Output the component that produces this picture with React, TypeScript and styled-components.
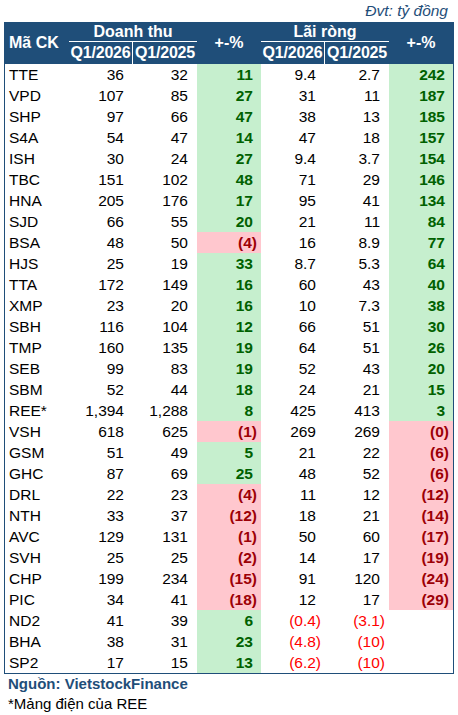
import React from "react";
import styled, { createGlobalStyle, css } from "styled-components";

const GlobalStyle = createGlobalStyle`
  html, body { margin: 0; padding: 0; background: #ffffff; }
  body { font-family: "Liberation Sans", Arial, sans-serif; color: #000; }
`;

const NAVY = "#1F4E79";

type Tone = "up" | "down" | "none";

const Page = styled.div`
  width: 458px;
  padding-left: 4px;
  box-sizing: border-box;
`;

const UnitNote = styled.div`
  width: 450px;
  height: 22px;
  line-height: 22px;
  box-sizing: border-box;
  padding-right: 6px;
  text-align: right;
  font-style: italic;
  font-size: 15.5px;
  color: ${NAVY};
`;

const Table = styled.div`
  width: 448px;
  border: 1px solid ${NAVY};
  border-top: none;
`;

const Header = styled.div`
  display: grid;
  grid-template-columns: repeat(7, 64px);
  grid-template-rows: 20px 22px;
  background: ${NAVY};
  color: #ffffff;
  font-weight: bold;
  font-size: 16px;
`;

const HeadCell = styled.div<{ $col: number; $span?: number; $rows?: number; $row?: number; $align?: "left" | "center" }>`
  grid-column: ${(p) => p.$col} / span ${(p) => p.$span ?? 1};
  grid-row: ${(p) => p.$row ?? 1} / span ${(p) => p.$rows ?? 1};
  display: flex;
  align-items: center;
  justify-content: ${(p) => (p.$align === "left" ? "flex-start" : "center")};
  padding-left: ${(p) => (p.$align === "left" ? "4px" : "0")};
  white-space: nowrap;
`;

const GroupTitle = styled(HeadCell)`
  border-bottom: 1px solid #ffffff;
  box-sizing: border-box;
`;

const SubHead = styled(HeadCell)<{ $divider?: boolean }>`
  box-sizing: border-box;
  letter-spacing: -0.2px;
  ${(p) =>
    p.$divider &&
    css`
      border-right: 1px solid #ffffff;
    `}
`;

const Row = styled.div`
  display: grid;
  grid-template-columns: repeat(7, 64px);
  height: 21px;
  font-size: 15.5px;
  line-height: 21px;
`;

const Code = styled.div`
  padding-left: 4px;
  white-space: nowrap;
`;

const Num = styled.div<{ $neg?: boolean; $red?: boolean }>`
  text-align: right;
  padding-right: ${(p) => (p.$neg ? "4px" : "9px")};
  color: ${(p) => (p.$red ? "#FF0000" : "#000")};
  white-space: nowrap;
`;

const Pct = styled.div<{ $tone: Tone; $neg?: boolean }>`
  text-align: right;
  padding-right: ${(p) => (p.$neg ? "4px" : "8px")};
  font-weight: bold;
  white-space: nowrap;
  ${(p) =>
    p.$tone === "up" &&
    css`
      background: #c6efce;
      color: #006100;
    `}
  ${(p) =>
    p.$tone === "down" &&
    css`
      background: #ffc7ce;
      color: #9c0006;
    `}
`;

const Source = styled.div`
  height: 20px;
  line-height: 20px;
  padding-left: 4px;
  font-size: 15px;
  font-weight: bold;
  color: ${NAVY};
`;

const Footnote = styled.div`
  height: 20px;
  line-height: 20px;
  padding-left: 4px;
  font-size: 15px;
`;

type RowData = [string, string, string, string, string, string, string];

const rows: RowData[] = [
  ["TTE", "36", "32", "11", "9.4", "2.7", "242"],
  ["VPD", "107", "85", "27", "31", "11", "187"],
  ["SHP", "97", "66", "47", "38", "13", "185"],
  ["S4A", "54", "47", "14", "47", "18", "157"],
  ["ISH", "30", "24", "27", "9.4", "3.7", "154"],
  ["TBC", "151", "102", "48", "71", "29", "146"],
  ["HNA", "205", "176", "17", "95", "41", "134"],
  ["SJD", "66", "55", "20", "21", "11", "84"],
  ["BSA", "48", "50", "(4)", "16", "8.9", "77"],
  ["HJS", "25", "19", "33", "8.7", "5.3", "64"],
  ["TTA", "172", "149", "16", "60", "43", "40"],
  ["XMP", "23", "20", "16", "10", "7.3", "38"],
  ["SBH", "116", "104", "12", "66", "51", "30"],
  ["TMP", "160", "135", "19", "64", "51", "26"],
  ["SEB", "99", "83", "19", "52", "43", "20"],
  ["SBM", "52", "44", "18", "24", "21", "15"],
  ["REE*", "1,394", "1,288", "8", "425", "413", "3"],
  ["VSH", "618", "625", "(1)", "269", "269", "(0)"],
  ["GSM", "51", "49", "5", "21", "22", "(6)"],
  ["GHC", "87", "69", "25", "48", "52", "(6)"],
  ["DRL", "22", "23", "(4)", "11", "12", "(12)"],
  ["NTH", "33", "37", "(12)", "18", "21", "(14)"],
  ["AVC", "129", "131", "(1)", "50", "60", "(17)"],
  ["SVH", "25", "25", "(2)", "14", "17", "(19)"],
  ["CHP", "199", "234", "(15)", "91", "120", "(24)"],
  ["PIC", "34", "41", "(18)", "12", "17", "(29)"],
  ["ND2", "41", "39", "6", "(0.4)", "(3.1)", ""],
  ["BHA", "38", "31", "23", "(4.8)", "(10)", ""],
  ["SP2", "17", "15", "13", "(6.2)", "(10)", ""],
];

const isNeg = (v: string) => v.startsWith("(");
const toneOf = (v: string): Tone => (v === "" ? "none" : isNeg(v) ? "down" : "up");

const Value = ({ v }: { v: string }) => (
  <Num $neg={isNeg(v)} $red={isNeg(v)}>
    {v}
  </Num>
);

const Change = ({ v }: { v: string }) => (
  <Pct $tone={toneOf(v)} $neg={isNeg(v)}>
    {v}
  </Pct>
);

export default function App() {
  return (
    <>
      <GlobalStyle />
      <Page>
        <UnitNote>Đvt: tỷ đồng</UnitNote>
        <Table>
          <Header>
            <HeadCell $col={1} $rows={2} $align="left">
              Mã CK
            </HeadCell>
            <GroupTitle $col={2} $span={2}>
              Doanh thu
            </GroupTitle>
            <HeadCell $col={4} $rows={2}>
              +-%
            </HeadCell>
            <GroupTitle $col={5} $span={2}>
              Lãi ròng
            </GroupTitle>
            <HeadCell $col={7} $rows={2}>
              +-%
            </HeadCell>
            <SubHead $col={2} $row={2} $divider>
              Q1/2026
            </SubHead>
            <SubHead $col={3} $row={2}>
              Q1/2025
            </SubHead>
            <SubHead $col={5} $row={2} $divider>
              Q1/2026
            </SubHead>
            <SubHead $col={6} $row={2}>
              Q1/2025
            </SubHead>
          </Header>
          {rows.map((r) => (
            <Row key={r[0]}>
              <Code>{r[0]}</Code>
              <Value v={r[1]} />
              <Value v={r[2]} />
              <Change v={r[3]} />
              <Value v={r[4]} />
              <Value v={r[5]} />
              <Change v={r[6]} />
            </Row>
          ))}
        </Table>
        <Source>Nguồn: VietstockFinance</Source>
        <Footnote>*Mảng điện của REE</Footnote>
      </Page>
    </>
  );
}
